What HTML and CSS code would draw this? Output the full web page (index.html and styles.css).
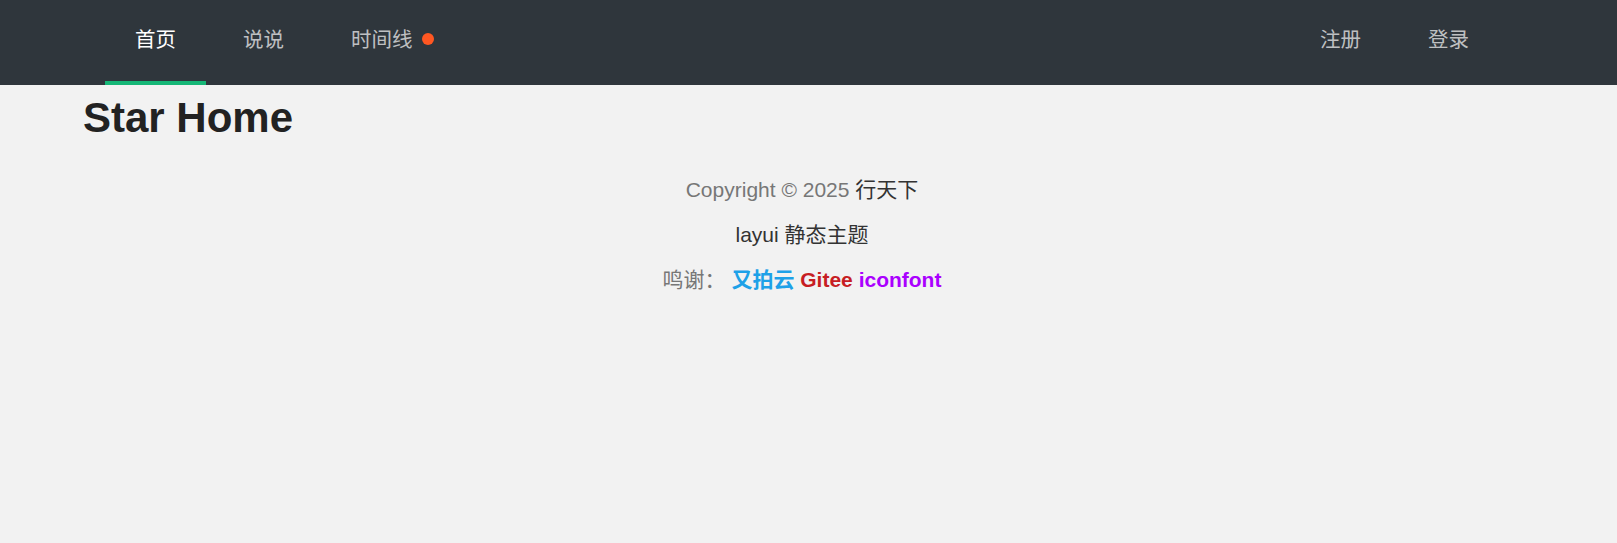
FILE: index.html
```html
<!DOCTYPE html>
<html lang="zh-CN">
<head>
    <meta charset="UTF-8">
    <meta name="viewport" content="width=device-width, initial-scale=1.0">
    <title>Star Home</title>
    <link rel="stylesheet" href="styles.css">
</head>
<body>
    <div class="header">
        <div class="container">
            <ul class="nav">
                <li class="nav-item this"><a href="#">首页</a></li>
                <li class="nav-item"><a href="#">说说</a></li>
                <li class="nav-item"><a href="#">时间线<span class="dot"></span></a></li>
            </ul>
            <ul class="nav nav-right">
                <li class="nav-item"><a href="#">注册</a></li>
                <li class="nav-item"><a href="#">登录</a></li>
            </ul>
        </div>
    </div>
    <div class="container">
        <h1 class="title">Star Home</h1>
        <div class="footer">
            <p class="gray">Copyright © 2025 <a href="#">行天下</a></p>
            <p><a href="#">layui 静态主题</a></p>
            <p class="gray">鸣谢： <a class="upyun" href="#">又拍云</a> <a class="gitee" href="#">Gitee</a> <a class="iconfont" href="#">iconfont</a></p>
        </div>
    </div>
</body>
</html>
```

FILE: styles.css
```css
body {
    margin: 0;
    background: #f2f2f2;
    color: #333;
    font-family: 'Liberation Sans', 'Noto Sans CJK SC', sans-serif;
}
a {
    color: #333;
    text-decoration: none;
}
.container {
    margin: 0 96px 0 83px;
}
.header {
    background: #2f363c;
    height: 85px;
}
.header .container {
    display: flex;
    justify-content: space-between;
    padding: 0 22px;
}
.nav {
    display: flex;
    gap: 7px;
    margin: 0;
    padding: 0;
    list-style: none;
}
.nav-item {
    position: relative;
    height: 85px;
}
.nav-item a {
    display: block;
    padding: 0 30px;
    line-height: 80px;
    font-size: 20.5px;
    color: rgba(255, 255, 255, 0.7);
}
.nav-item.this a {
    color: #fff;
}
.nav-item.this::after {
    content: "";
    position: absolute;
    left: 0;
    right: 0;
    bottom: 0;
    height: 4px;
    background: #16b777;
}
.dot {
    display: inline-block;
    width: 12px;
    height: 12px;
    margin-left: 9px;
    border-radius: 50%;
    background: #ff5722;
    vertical-align: 2px;
}
.title {
    margin: 9px 0 0;
    font-size: 42px;
    font-weight: bold;
    color: #222;
}
.footer {
    margin-top: 25px;
    text-align: center;
    font-size: 21px;
}
.footer p {
    margin: 0;
    line-height: 45px;
}
.gray {
    color: #777;
}
.footer .upyun,
.footer .gitee,
.footer .iconfont {
    font-weight: bold;
}
.upyun {
    color: #1ea1e8;
}
.gitee {
    color: #c71d23;
}
.iconfont {
    color: #a0f;
}
```
